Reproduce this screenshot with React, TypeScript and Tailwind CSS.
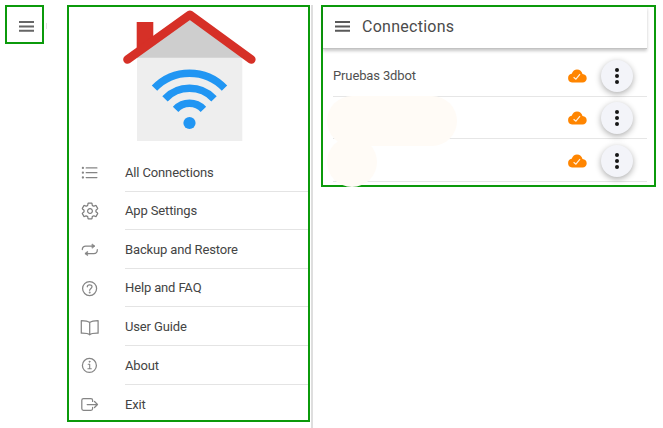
import React from "react";
import { IoSettingsOutline } from "react-icons/io5";

type IconProps = { children: React.ReactNode };

function Icon({ children }: IconProps) {
  return (
    <svg viewBox="0 0 20 20" className="h-5 w-5 shrink-0" fill="none" stroke="#858585" strokeWidth="1.25" strokeLinecap="round" strokeLinejoin="round">
      {children}
    </svg>
  );
}

function ListIcon() {
  return (
    <Icon>
      <path d="M6.2 5.9H16.9M6.2 10.7H16.9M6.2 15.5H16.9" />
      <g fill="#858585" stroke="none">
        <circle cx="2.9" cy="5.9" r="1.15" />
        <circle cx="2.9" cy="10.7" r="1.15" />
        <circle cx="2.9" cy="15.5" r="1.15" />
      </g>
    </Icon>
  );
}

function RepeatIcon() {
  return (
    <Icon>
      <path d="M2.3 10.6C2.3 8.3 3.7 7.1 5.8 7.1H14.2M17.3 10.7C17.3 13.1 15.9 14.5 13.8 14.5H5.6" />
      <path d="M12.4 5.2L14.8 7.1L12.4 9ZM7.3 12.6L4.9 14.5L7.3 16.4Z" fill="#858585" strokeWidth=".8" />
    </Icon>
  );
}

function HelpIcon() {
  return (
    <Icon>
      <circle cx="9.6" cy="10.6" r="7" />
      <path d="M7.3 8.8C7.3 6.1 12 6.1 12 8.7C12 10.4 9.7 10.4 9.7 12.3" />
      <circle cx="9.7" cy="14.4" r=".35" fill="#858585" />
    </Icon>
  );
}

function BookIcon() {
  return (
    <Icon>
      <path d="M9.7 5.6C8 4.2 5 3.7 1.3 3.7V16.2C5 16.1 8 16.3 9.7 17.8C11.4 16.3 14.4 16.1 18.1 16.2V3.7C14.4 3.7 11.4 4.2 9.7 5.6ZM9.7 5.6V17.6" />
    </Icon>
  );
}

function InfoIcon() {
  return (
    <Icon>
      <circle cx="9.4" cy="10.4" r="7" />
      <path d="M8.2 9.2H9.7V13.6M7.9 13.8H11.3" strokeWidth="1.1" />
      <circle cx="9.5" cy="6.7" r=".5" fill="#858585" strokeWidth=".9" />
    </Icon>
  );
}

function ExitIcon() {
  return (
    <Icon>
      <path d="M12.6 7.4V6.3C12.6 5.1 12 4.5 10.9 4.5H3.5C2.4 4.5 1.8 5.1 1.8 6.3V14.5C1.8 15.7 2.4 16.3 3.5 16.3H10.9C12 16.3 12.6 15.7 12.6 14.5V13.4M7.2 10.5H17.4M14.5 7.5L17.5 10.5L14.5 13.5" />
    </Icon>
  );
}

function Burger({ className }: { className: string }) {
  return (
    <svg viewBox="0 0 15 11" className={"h-[11px] w-[15px] shrink-0 " + className} fill="currentColor">
      <path d="M0 0H15V2H0ZM0 4.4H15V6.4H0ZM0 8.7H15V10.7H0Z" />
    </svg>
  );
}

function House() {
  return (
    <svg viewBox="120 7 140 136" className="ml-[51px] h-[136px] w-[140px] shrink-0" fill="none">
      <path d="M137 57H242.3V141H137Z" fill="#eeeeee" />
      <path d="M189.7 15L137 55V57.8H242.3V55Z" fill="#cecece" />
      <path d="M136.7 22H153.3V42L136.7 54Z" fill="#d63027" />
      <path d="M127.5 59.4L189.9 14.8L251.3 59.4" stroke="#d63027" strokeWidth="8.6" strokeLinecap="round" strokeLinejoin="round" />
      <g stroke="#2196f3" strokeWidth="7.5">
        <path d="M154.5 88.2A48.5 48.5 0 0 1 224.5 88.2" />
        <path d="M165 98.8A34 34 0 0 1 214 98.8" />
        <path d="M175.6 109.4A19 19 0 0 1 203.4 109.4" />
      </g>
      <circle cx="189.5" cy="123" r="6.1" fill="#2196f3" />
    </svg>
  );
}

const menu = [
  { label: "All Connections", icon: <ListIcon /> },
  { label: "App Settings", icon: <IoSettingsOutline className="h-5 w-5 p-[0.5px] text-[#7c7c7c]" /> },
  { label: "Backup and Restore", icon: <RepeatIcon /> },
  { label: "Help and FAQ", icon: <HelpIcon /> },
  { label: "User Guide", icon: <BookIcon /> },
  { label: "About", icon: <InfoIcon /> },
  { label: "Exit", icon: <ExitIcon /> },
];

function Connection({ name }: { name: string }) {
  return (
    <div className="flex h-[42.5px] items-center border-b border-[#e6e6e6]">
      <span className="flex-1 pt-px text-[13px] tracking-[-0.13px] text-[#505050]">{name}</span>
      <svg viewBox="0 0 20 14" className="mr-[14px] mt-[2px] h-[14px] w-5 shrink-0">
        <path d="M5 13.5A4.4 4.4 0 0 1 4.7 4.8C5.7 1.9 7.7.4 10 .4C12.8.4 14.9 2.1 15.5 5.1C18 5.3 19.7 7 19.7 9.3C19.7 11.8 18 13.5 15.5 13.5Z" fill="#ff8500" />
        <path d="M6.6 8.2L8.9 10.2L13 5.2" fill="none" stroke="#fff1df" strokeWidth="1.2" />
      </svg>
      <button className="mr-[14px] mt-[2px] flex h-8 w-8 shrink-0 flex-col items-center justify-center gap-[2px] rounded-full bg-[#f3f4f9] shadow-[0_2px_6px_rgba(0,0,0,0.32)]">
        <i className="h-1 w-1 rounded-full bg-[#161616]" />
        <i className="h-1 w-1 rounded-full bg-[#161616]" />
        <i className="h-1 w-1 rounded-full bg-[#161616]" />
      </button>
    </div>
  );
}

export default function App() {
  return (
    <main className="flex h-[428px] w-[663px] items-start overflow-hidden bg-white pl-[5px] pt-[5px] font-[Roboto,sans-serif]">
      <div className="flex h-[39px] w-[39px] shrink-0 items-center justify-center border-2 border-[#0b9a0b] pl-1 pt-1">
        <Burger className="text-[#666666]" />
      </div>
      <div className="ml-0.5 mt-[18px] h-1.5 w-px shrink-0 bg-[#e2e2e2]" />

      <div className="ml-5 flex h-[423px] w-[246px] shrink-0 items-start border-r-2 border-[#dedede]">
        <nav className="flex h-[417px] w-[243px] shrink-0 flex-col border-2 border-[#0b9a0b]">
          <House />
          <ul className="mt-[10px]">
            {menu.map((item, i) => (
              <li key={item.label} className="flex h-[38.6px] items-center pl-[11px]">
                {item.icon}
                <span className={"ml-[25px] flex h-full w-[183px] items-center pt-px text-[13px] tracking-[-0.14px] text-[#444444] " + (i < 6 ? "border-b border-[#e4e4e4]" : "")}>
                  {item.label}
                </span>
              </li>
            ))}
          </ul>
        </nav>
      </div>

      <section className="relative ml-2 h-[182px] w-[335px] shrink-0 border-2 border-[#0b9a0b]">
        <header className="mr-[7px] flex h-[42px] items-center border-b border-[#c2c2c2] pl-3 shadow-[0_2px_3px_rgba(0,0,0,0.22)]">
          <Burger className="-mt-[3px] text-[#595959]" />
          <h1 className="-mt-px ml-3 text-[16px] tracking-[0.27px] text-[#4b4b4b]">Connections</h1>
        </header>
        <div className="ml-[10px] mr-[7px] pt-[5px]">
          <Connection name="Pruebas 3dbot" />
          <Connection name="" />
          <Connection name="" />
        </div>
        <div className="absolute left-[4px] top-[89px] h-[50px] w-[130px] rounded-full bg-[#fffbf6]" />
        <div className="absolute left-[4px] top-[130px] h-[50px] w-[50px] rounded-full bg-[#fffbf6]" />
      </section>
    </main>
  );
}
